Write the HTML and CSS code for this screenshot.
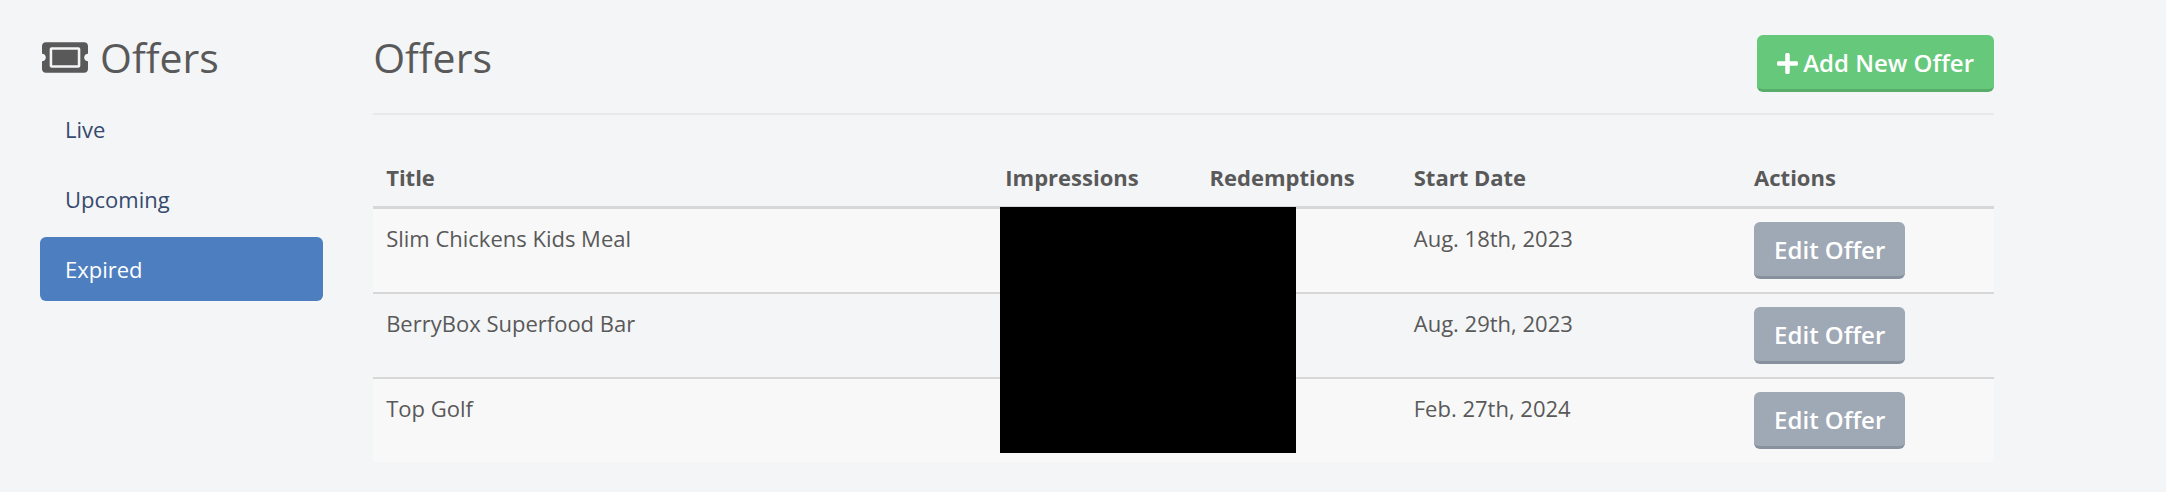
FILE: index.html
```
<!DOCTYPE html>
<html lang="en">
<head>
<meta charset="utf-8" />
<title>Offers</title>
<link rel="stylesheet" href="styles.css">
</head>

<body>
<div id="page">
	<div class="sidebar">
		<h2>
			<svg class="icon-ticket" viewBox="0 0 576 512" aria-hidden="true"><path d="M128 160h320v192H128V160zm400 96c0 26.51 21.49 48 48 48v96c0 26.51-21.49 48-48 48H48c-26.51 0-48-21.49-48-48v-96c26.51 0 48-21.49 48-48s-21.49-48-48-48v-96c0-26.51 21.49-48 48-48h480c26.51 0 48 21.49 48 48v96c-26.51 0-48 21.49-48 48zm-48-104c0-13.255-10.745-24-24-24H120c-13.255 0-24 10.745-24 24v208c0 13.255 10.745 24 24 24h336c13.255 0 24-10.745 24-24V152z"/></svg>
			Offers
		</h2>
		<nav>
			<a href="#live">Live</a>
			<a href="#upcoming">Upcoming</a>
			<a href="#expired" class="active">Expired</a>
		</nav>
	</div>
	<div class="main">
		<div class="header">
			<h1>Offers</h1>
			<button type="button" class="btn add">
				<svg class="icon-plus" viewBox="0 32 448 448" aria-hidden="true"><path d="M416 208H272V64c0-17.67-14.33-32-32-32h-32c-17.67 0-32 14.33-32 32v144H32c-17.67 0-32 14.33-32 32v32c0 17.67 14.33 32 32 32h144v144c0 17.67 14.33 32 32 32h32c17.67 0 32-14.33 32-32V304h144c17.67 0 32-14.33 32-32v-32c0-17.67-14.33-32-32-32z"/></svg>
				Add New Offer
			</button>
		</div>
		<table class="offers">
			<thead>
				<tr>
					<th class="title">Title</th>
					<th class="count">Impressions</th>
					<th class="count">Redemptions</th>
					<th class="date">Start Date</th>
					<th>Actions</th>
				</tr>
			</thead>
			<tbody>
				<tr>
					<td>Slim Chickens Kids Meal</td>
					<td class="relative"><div class="cover"></div></td>
					<td></td>
					<td>Aug. 18th, 2023</td>
					<td><button type="button" class="btn">Edit Offer</button></td>
				</tr>
				<tr>
					<td>BerryBox Superfood Bar</td>
					<td></td>
					<td></td>
					<td>Aug. 29th, 2023</td>
					<td><button type="button" class="btn">Edit Offer</button></td>
				</tr>
				<tr>
					<td>Top Golf</td>
					<td></td>
					<td></td>
					<td>Feb. 27th, 2024</td>
					<td><button type="button" class="btn">Edit Offer</button></td>
				</tr>
			</tbody>
		</table>
	</div>
</div>
</body>
</html>
```

FILE: styles.css
```
body {
	margin:0;
	padding:0;
	background:#f4f5f7;
	color:#595959;
	font:22px/32px "Open Sans", "Noto Sans", sans-serif;}
#page {
	display:grid;
	grid-template-columns:283fr 1620fr;
	column-gap:50px;
	padding:35px 172px 30px 40px;}
h1, h2 {
	margin:0;
	font-size:41px;
	line-height:44px;
	font-weight:400;}
h2 {
	display:flex;
	align-items:center;
	gap:12px;
	padding-left:2px;}
svg {fill:currentColor;}
.icon-ticket {
	width:46px;
	height:41px;}
.icon-plus {
	width:21px;
	height:21px;}

/* sidebar */
nav {
	display:flex;
	flex-direction:column;
	gap:6px;
	margin-top:18px;}
nav a {
	padding:16px 25px;
	border-radius:6px;
	color:#364a6d;
	text-decoration:none;}
nav a.active {
	background:#4d7ebf;
	color:#ffffff;}

/* content */
.header {
	display:flex;
	justify-content:space-between;
	align-items:flex-start;
	padding-bottom:21px;
	border-bottom:2px solid #e8e9eb;}
.btn {
	display:flex;
	align-items:center;
	gap:5px;
	padding:12px 20px 10px;
	border:0;
	border-bottom:3px solid #87919e;
	border-radius:6px;
	background:#9fa9b6;
	color:#ffffff;
	font:600 24px/32px "Open Sans", "Noto Sans", sans-serif;
	white-space:nowrap;
	cursor:pointer;}
.add {
	background:#66c87b;
	border-color:#57ad69;}
.offers {
	width:100%;
	margin-top:33px;
	table-layout:fixed;
	border-collapse:separate;
	border-spacing:0;}
.offers th, .offers td {
	box-sizing:border-box;
	padding:13px;
	text-align:left;
	vertical-align:top;}
.offers th {
	font-weight:700;
	border-bottom:3px solid #d7d7d7;}
.offers tr + tr td {border-top:2px solid #d7d7d7;}
.offers tbody tr:nth-child(odd) {background:#f8f8f8;}
.title {width:38.2%;}
.count {width:12.6%;}
.date {width:21%;}
.relative {position:relative;}
.cover {
	position:absolute;
	top:-2px;
	left:8px;
	width:145%;
	height:246px;
	background:#000000;}
```
